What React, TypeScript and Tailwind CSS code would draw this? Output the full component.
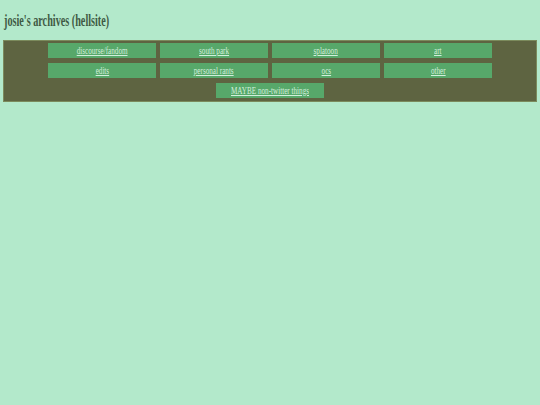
const links = [
  ["discourse/fandom", "south park", "splatoon", "art"],
  ["edits", "personal rants", "ocs", "other"],
  ["MAYBE non-twitter things"],
];

export default function App() {
  return (
    <div className="min-h-[405px] bg-[#b3e9cb] pt-[11px] px-[3px]" style={{ fontFamily: '"Liberation Serif", "Times New Roman", serif' }}>
      <h1 className="h-[20px] pl-[1px] text-[17px] font-bold leading-[20px] text-[#3f5a44]">
        <span className="inline-block origin-left scale-x-[0.6] whitespace-nowrap">josie's archives (hellsite)</span>
      </h1>
      <div className="mt-[9px] flex flex-col items-center gap-[5px] border border-[#7b8a5c] bg-[#5e6441] pt-[2px] pb-[3px]">
        {links.map((row, i) => (
          <div key={i} className="flex gap-[4px]">
            {row.map((l) => (
              <a
                key={l}
                href="#"
                className="flex h-[15px] w-[108px] items-center justify-center bg-[#57a86a] text-[11px] leading-none text-[#d2efdc] underline"
              >
                <span className="inline-block scale-x-[0.65] whitespace-nowrap">{l}</span>
              </a>
            ))}
          </div>
        ))}
      </div>
    </div>
  );
}
